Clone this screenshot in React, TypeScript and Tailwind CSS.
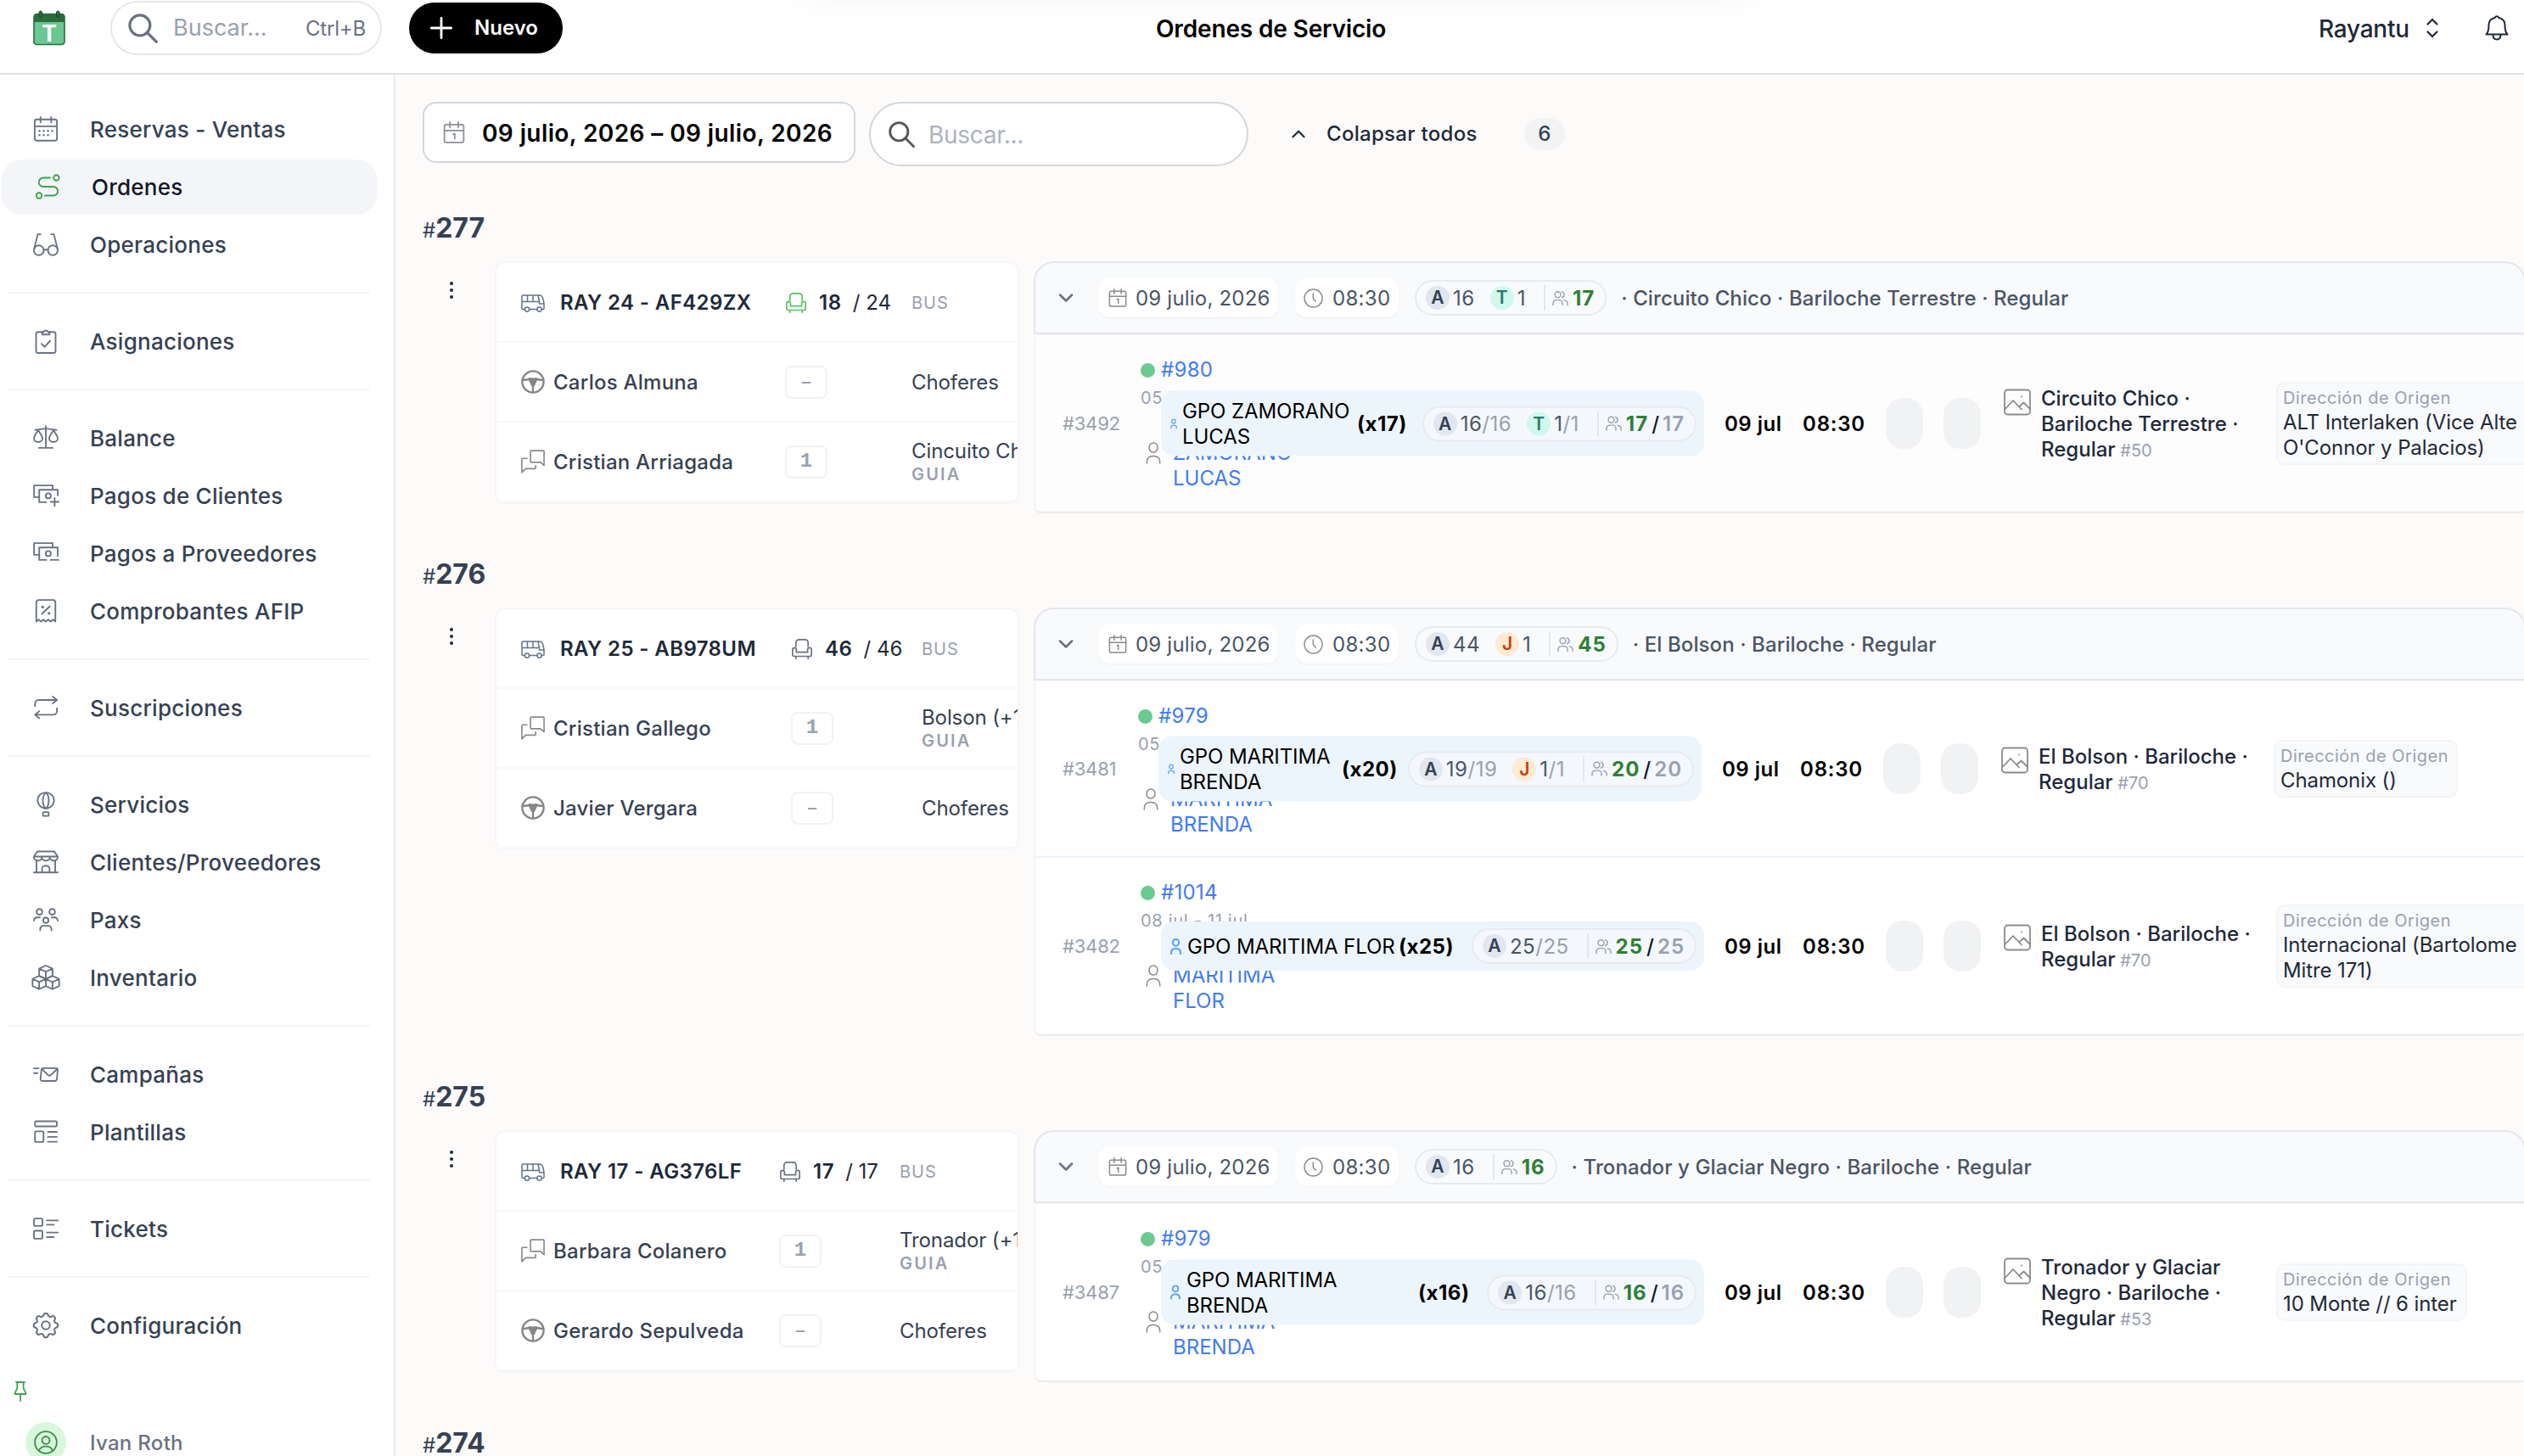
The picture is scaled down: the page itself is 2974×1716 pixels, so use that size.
import React from "react";
import clsx from "clsx";
import { ChevronDown, ChevronUp } from "lucide-react";
import { TbSettings } from "react-icons/tb";

interface IconProps {
  className?: string;
  strokeWidth?: number;
  viewBox?: string;
  children?: React.ReactNode;
}

function Svg({ className, strokeWidth = 1.6, viewBox = "0 0 24 24", children }: IconProps) {
  return (
    <svg
      viewBox={viewBox}
      fill="none"
      stroke="currentColor"
      strokeWidth={strokeWidth}
      strokeLinecap="round"
      strokeLinejoin="round"
      className={clsx("shrink-0", className)}
    >
      {children}
    </svg>
  );
}

const navIcons: Record<string, React.ReactNode> = {
  calendar: (
    <>
      <rect x="1.5" y="3" width="21" height="20" rx="2" />
      <path d="M1.5 9.5h21M7 .8v5M17 .8v5" />
      <path d="M6 13.7h.01M10 13.7h.01M14 13.7h.01M18 13.7h.01M6 17.8h.01M10 17.8h.01M14 17.8h.01" strokeWidth="2" />
    </>
  ),
  route: (
    <>
      <circle cx="20.3" cy="3.6" r="2.6" />
      <circle cx="4" cy="20.4" r="2.6" />
      <path d="M14.5 3.6H8a4.2 4.2 0 0 0 0 8.4h9.5a4.2 4.2 0 0 1 0 8.4h-8" />
    </>
  ),
  glasses: (
    <>
      <circle cx="5.4" cy="17.6" r="4.6" />
      <circle cx="18.6" cy="17.6" r="4.6" />
      <path d="M10 17h4M.9 16.5 4.4 2.5H7M23.1 16.5 19.6 2.5H17" />
    </>
  ),
  clipboard: (
    <>
      <rect x="2.8" y="3.4" width="18.4" height="19.8" rx="2" />
      <path d="M8.5 5.8V3.6h1.3a2.3 2.3 0 0 1 4.4 0h1.3v2.2z" fill="white" />
      <path d="m8 14.5 2.8 3L16 11.8" />
    </>
  ),
  balance: (
    <>
      <path d="M12 .9v20.6M5.5 21.5h13M2 4.6c4 0 6-1.3 10-1.3s6 1.3 10 1.3" />
      <path d="M4.8 5C3 7.5.8 10.5.8 12.6a4 3.4 0 0 0 8 0C8.8 10.5 6.600 7.500 4.800 5zM19.200 5c-1.800 2.500-4 5.500-4 7.600a4 3.400 0 0 0 8 0c0-2.100-2.200-5.100-4-7.600z" />
    </>
  ),
  cashPlus: (
    <>
      <path d="M5.500 13.500H.9v-11h17.600v3.300M12.500 18.300H5.800V6.600h17.400v5.200" />
      <circle cx="14.300" cy="12.300" r="2.400" />
      <path d="M16.500 18h7.500M20.300 14.300v7.500" />
    </>
  ),
  cashMinus: (
    <>
      <path d="M5.500 13.500H.9v-11h17.600v3.300M12.500 18.300H5.800V6.600h17.400v8" />
      <circle cx="14.300" cy="12.300" r="2.400" />
      <path d="M16.500 18.300h7.500" />
    </>
  ),
  receipt: (
    <>
      <path d="M3 22V4a2.300 2.300 0 0 1 2.300-2.300h13.400A2.300 2.300 0 0 1 21 4v18l-2.200-1.800-2.300 1.800-2.200-1.800-2.300 1.800-2.300-1.800L7.500 22l-2.300-1.800z" />
      <path d="m8.300 14.800 7.400-7" />
      <path d="M9 8.300h.01M15 14.200h.01" strokeWidth="2.600" />
    </>
  ),
  repeat: (
    <>
      <path d="M1.800 10.500V8.300A3.500 3.500 0 0 1 5.300 4.800h17M18.500 1.500l4 3.300-4 3.300" />
      <path d="M22.500 12.500v2.700a3.500 3.500 0 0 1-3.500 3.500H1.800M5.800 15.400l-4 3.300 4 3.300" />
    </>
  ),
  balloon: (
    <>
      <path d="M12 .9c-4.500 0-7.800 3.200-7.800 7.200 0 3.700 3 7.700 7.800 7.700s7.800-4 7.800-7.700c0-4-3.300-7.200-7.800-7.200z" />
      <path d="M12 .9c-1.900 1.500-2.800 4-2.800 7.200s.9 6.200 2.800 7.700c1.900-1.500 2.800-4.500 2.800-7.700S13.900 2.400 12 .9z" />
      <rect x="9.300" y="19.300" width="5.400" height="3.600" rx=".6" />
    </>
  ),
  store: (
    <>
      <path d="M.8 21.800h22.400M3.200 10.500v11.300M20.800 10.500v11.300M8.500 21.800v-3.700a3.500 2.700 0 0 1 7 0v3.700" />
      <path d="M4 2h16l3.200 4.800v.8a3.700 3 0 0 1-7.400 0 3.800 3 0 0 1-7.600 0 3.700 3 0 0 1-7.400 0v-.8zM.8 6.800h22.400" />
    </>
  ),
  people: (
    <>
      <circle cx="6" cy="4.500" r="2.700" />
      <circle cx="18" cy="4.500" r="2.700" />
      <circle cx="12" cy="12.500" r="2.500" />
      <path d="M.8 12.800c.2-2 1.500-3 3.200-3h2.500M23.200 12.800c-.2-2-1.500-3-3.200-3h-2.500M6.700 22v-1.300a3 3 0 0 1 3-3h4.600a3 3 0 0 1 3 3V22" />
    </>
  ),
  boxes: (
    <>
      <path d="m12 .8 6.300 2.900v6.800L12 13.400l-6.300-2.900V3.700zM5.700 3.700 12 6.600l6.300-2.900M12 6.600v6.800" />
      <path d="m5.700 10.500 6.300 2.900v6.700L5.700 23l-6.200-2.900v-6.700zM-.5 13.400l6.200 2.900 6.300-2.900M5.700 16.300V23" />
      <path d="m18.300 10.500 6.200 2.900v6.700L18.300 23 12 20.100v-6.700zM12 13.400l6.300 2.900 6.200-2.900M18.300 16.300V23" />
    </>
  ),
  mail: (
    <>
      <path d="M9.800 6.300h11.700a1.800 1.800 0 0 1 1.700 2l-.8 8.300a2 2 0 0 1-2 1.800H8.700a1.700 1.700 0 0 1-1.700-2l.8-8.300a2 2 0 0 1 2-1.800z" />
      <path d="m8.300 7 5.300 5.500a2.500 2.500 0 0 0 3.500 0L22.800 7M.8 6.500h4.400M.8 11h3.400" />
    </>
  ),
  template: (
    <>
      <rect x="1.800" y="2" width="20.600" height="4.800" rx="1" />
      <rect x="1.800" y="11.500" width="8" height="10" rx="1" />
      <path d="M14 12h8.400M14 16.700h8.400M14 21.300h8.400" />
    </>
  ),
  list: (
    <>
      <rect x=".8" y="2.500" width="8" height="7" rx="1" />
      <rect x=".8" y="14" width="8" height="7.500" rx="1" />
      <path d="M13 4.300h10.300M13 8.300h6.500M13 15.700h10.300M13 20h6.500" />
    </>
  ),
};

function NavIcon({ name, className }: { name: string; className?: string }) {
  if (name === "settings") {
    return <TbSettings strokeWidth={1.3} className={clsx("-mx-1 size-[38px] shrink-0", className)} />;
  }
  return (
    <Svg className={clsx("size-[30px] overflow-visible", className)} strokeWidth={1.5}>
      {navIcons[name]}
    </Svg>
  );
}

const SearchIcon = ({ className }: IconProps) => (
  <Svg className={className} strokeWidth={2.2}>
    <circle cx="9.500" cy="9.500" r="8.200" />
    <path d="m15.500 15.500 7.300 7.300" />
  </Svg>
);

const DayIcon = ({ className }: IconProps) => (
  <Svg className={className} strokeWidth={1.6}>
    <rect x="1.500" y="3.500" width="21" height="19.500" rx="2" />
    <path d="M1.500 10h21M7.500 .8v6M16.500 .8v6M11 14.200l1.800-.8v5.600" />
  </Svg>
);

const ClockIcon = ({ className }: IconProps) => (
  <Svg className={className} strokeWidth={1.5}>
    <circle cx="12" cy="12" r="11" />
    <path d="M11.800 6.300v6l3 3.600" />
  </Svg>
);

const BusIcon = ({ className }: IconProps) => (
  <Svg className={className} viewBox="0 0 28 24" strokeWidth={1.5}>
    <path d="M4.500 19.500H2a1 1 0 0 1-1-1V4a1 1 0 0 1 1-1h19.500c3 0 4 2 4.600 5l.9 4.500v6a1 1 0 0 1-1 1h-1.500M9.500 19.500h9.500M1 10.500h20v-1.500M7.500 3v7.500M14 3v7.500M20 3l1.500 7.500v2.500h5.500" />
    <circle cx="7" cy="19.600" r="2.700" />
    <circle cx="21.500" cy="19.600" r="2.700" />
  </Svg>
);

const SeatIcon = ({ className }: IconProps) => (
  <Svg className={className} strokeWidth={1.7}>
    <path d="M4.800 9V4.300A3.500 3.500 0 0 1 8.300.8h7.400a3.500 3.500 0 0 1 3.500 3.500V9" />
    <path d="M3.300 10.300A2.500 2.500 0 0 0 .8 12.600v6.200a1.700 1.700 0 0 0 1.700 1.700h19a1.700 1.700 0 0 0 1.700-1.700v-6.200a2.300 2.300 0 0 0-4.600 0v3H5.400v-3a2.300 2.300 0 0 0-2.100-2.300zM4.800 20.800v2.400M19.200 20.800v2.400" />
  </Svg>
);

const WheelIcon = ({ className }: IconProps) => (
  <Svg className={className} strokeWidth={2}>
    <circle cx="12" cy="12" r="10.800" />
    <path d="M1.500 10.300c3.500 0 6.500-.8 8-1.600M22.500 10.300c-3.500 0-6.500-.8-8-1.600M12 13v9.500" />
    <path d="M8.500 10.200c2-1.500 5-1.500 7 0-.8 2-2 2.500-2.300 5h-2.400c-.3-2.500-1.500-3-2.300-5z" fill="currentColor" />
  </Svg>
);

const ChatIcon = ({ className }: IconProps) => (
  <Svg className={className} strokeWidth={1.4}>
    <path d="M10.200 1h12.300a.7.7 0 0 1 .7.7V16l-3.600-3.300h-9.400a.7.7 0 0 1-.7-.7V1.700a.7.7 0 0 1 .7-.7z" />
    <path d="M6 8.800H1.500a.7.700 0 0 0-.7.700V23l3.800-3.800h9.400a.7.7 0 0 0 .7-.7V16" />
  </Svg>
);

const PersonIcon = ({ className, strokeWidth = 1.5 }: IconProps) => (
  <Svg className={className} viewBox="0 0 18 26" strokeWidth={strokeWidth}>
    <ellipse cx="9" cy="6.500" rx="5" ry="5.500" />
    <path d="M1.300 25v-1.500C1.300 19 4 16.500 9 16.500s7.700 2.500 7.700 7V25" />
  </Svg>
);

const PeopleIcon = ({ className }: IconProps) => (
  <Svg className={className} viewBox="0 0 20 20" strokeWidth={1.5}>
    <circle cx="6.800" cy="5.500" r="3.600" />
    <path d="M1 18.500v-2.300a4 4 0 0 1 4-4h3.600a4 4 0 0 1 4 4v2.300M12 2a3.600 3.600 0 0 1 0 7M15 12.500c2.500.5 4 2 4 4.200v1.800" />
  </Svg>
);

const ImageIcon = ({ className }: IconProps) => (
  <Svg className={className} viewBox="0 0 32 32" strokeWidth={1.8}>
    <rect x="1" y="1.500" width="30" height="29" rx="3.500" />
    <path d="m1.500 24 9.500-10 10 10.500M18.500 21l5-4.500L31 24" />
    <path d="M21 9.500h.01" strokeWidth="2" />
  </Svg>
);

function Logo() {
  return (
    <svg viewBox="0 0 38 42" className="h-[42px] w-[38px] shrink-0">
      <rect x="1" y="4.500" width="36" height="36" rx="3.500" fill="#68c890" stroke="#2c6b3c" strokeWidth="1.600" />
      <path d="M1 14V8a3.500 3.500 0 0 1 3.500-3.500h29A3.500 3.500 0 0 1 37 8v6z" fill="#2c6b3c" />
      <rect x="7" y="1" width="3.600" height="7.500" rx="1.800" fill="#2c6b3c" stroke="#1b4426" />
      <rect x="27.500" y="1" width="3.600" height="7.500" rx="1.800" fill="#2c6b3c" stroke="#1b4426" />
      <text x="19" y="36.500" textAnchor="middle" fontFamily="Inter" fontWeight="700" fontSize="27" fill="white">
        T
      </text>
    </svg>
  );
}

const navGroups = [
  [
    { label: "Reservas - Ventas", icon: "calendar" },
    { label: "Ordenes", icon: "route", active: true },
    { label: "Operaciones", icon: "glasses" },
  ],
  [{ label: "Asignaciones", icon: "clipboard" }],
  [
    { label: "Balance", icon: "balance" },
    { label: "Pagos de Clientes", icon: "cashPlus" },
    { label: "Pagos a Proveedores", icon: "cashMinus" },
    { label: "Comprobantes AFIP", icon: "receipt" },
  ],
  [{ label: "Suscripciones", icon: "repeat" }],
  [
    { label: "Servicios", icon: "balloon" },
    { label: "Clientes/Proveedores", icon: "store" },
    { label: "Paxs", icon: "people" },
    { label: "Inventario", icon: "boxes" },
  ],
  [
    { label: "Campañas", icon: "mail" },
    { label: "Plantillas", icon: "template" },
  ],
  [{ label: "Tickets", icon: "list" }],
  [{ label: "Configuración", icon: "settings" }],
];

interface PaxCount {
  type: "A" | "T" | "J";
  count: number;
}

interface CrewMember {
  role: "chofer" | "guia";
  name: string;
  badge: string;
  detail: string;
}

interface ServiceRow {
  id: string;
  idWidth: string;
  booking: string;
  dates: string;
  customer: string;
  group: string;
  groupWidth: string;
  iconSize: string;
  pax: PaxCount[];
  total: number;
  service: string;
  serviceId: string;
  address: string;
  addressWidth: string;
}

interface Order {
  id: string;
  vehicle: string;
  cols: string;
  used: number;
  seats: number;
  seatColor: string;
  crew: CrewMember[];
  pax: PaxCount[];
  total: number;
  title: string;
  bodyBg: string;
  rows: ServiceRow[];
}

const orders: Order[] = [
  {
    id: "277",
    vehicle: "RAY 24 - AF429ZX",
    cols: "grid-cols-[311px_149px_200px]",
    used: 18,
    seats: 24,
    seatColor: "text-[#4fc562]",
    crew: [
      { role: "chofer", name: "Carlos Almuna", badge: "–", detail: "Choferes" },
      { role: "guia", name: "Cristian Arriagada", badge: "1", detail: "Cincuito Chico" },
    ],
    pax: [
      { type: "A", count: 16 },
      { type: "T", count: 1 },
    ],
    total: 17,
    title: "Circuito Chico · Bariloche Terrestre · Regular",
    bodyBg: "bg-[#fdfdfe]",
    rows: [
      {
        id: "#3492",
        idWidth: "w-[92px]",
        booking: "#980",
        dates: "05 jul - 11 jul",
        customer: "GPO\nZAMORANO\nLUCAS",
        group: "GPO ZAMORANO\nLUCAS",
        groupWidth: "w-[206px]",
        iconSize: "h-3 w-2 mr-[6px]",
        pax: [
          { type: "A", count: 16 },
          { type: "T", count: 1 },
        ],
        total: 17,
        service: "Circuito Chico ·\nBariloche Terrestre ·\nRegular",
        serviceId: "#50",
        address: "ALT Interlaken (Vice Alte\nO'Connor y Palacios)",
        addressWidth: "w-[310px]",
      },
    ],
  },
  {
    id: "276",
    vehicle: "RAY 25 - AB978UM",
    cols: "grid-cols-[318px_154px_200px]",
    used: 46,
    seats: 46,
    seatColor: "text-gray-500",
    crew: [
      { role: "guia", name: "Cristian Gallego", badge: "1", detail: "Bolson (+1)" },
      { role: "chofer", name: "Javier Vergara", badge: "–", detail: "Choferes" },
    ],
    pax: [
      { type: "A", count: 44 },
      { type: "J", count: 1 },
    ],
    total: 45,
    title: "El Bolson · Bariloche · Regular",
    bodyBg: "bg-white",
    rows: [
      {
        id: "#3481",
        idWidth: "w-[89px]",
        booking: "#979",
        dates: "05 jul - 11 jul",
        customer: "GPO\nMARITIMA\nBRENDA",
        group: "GPO MARITIMA\nBRENDA",
        groupWidth: "w-[191px]",
        iconSize: "h-3 w-2 mr-[6px]",
        pax: [
          { type: "A", count: 19 },
          { type: "J", count: 1 },
        ],
        total: 20,
        service: "El Bolson · Bariloche ·\nRegular",
        serviceId: "#70",
        address: "Chamonix ()",
        addressWidth: "w-[217px]",
      },
      {
        id: "#3482",
        idWidth: "w-[92px]",
        booking: "#1014",
        dates: "08 jul - 11 jul",
        customer: "GPO\nMARITIMA\nFLOR",
        group: "GPO MARITIMA FLOR",
        groupWidth: "w-[249px]",
        iconSize: "h-[19px] w-[13px] mr-[7px]",
        pax: [{ type: "A", count: 25 }],
        total: 25,
        service: "El Bolson · Bariloche ·\nRegular",
        serviceId: "#70",
        address: "Internacional (Bartolome\nMitre 171)",
        addressWidth: "w-[310px]",
      },
    ],
  },
  {
    id: "275",
    vehicle: "RAY 17 - AG376LF",
    cols: "grid-cols-[304px_142px_200px]",
    used: 17,
    seats: 17,
    seatColor: "text-gray-500",
    crew: [
      { role: "guia", name: "Barbara Colanero", badge: "1", detail: "Tronador (+1)" },
      { role: "chofer", name: "Gerardo Sepulveda", badge: "–", detail: "Choferes" },
    ],
    pax: [{ type: "A", count: 16 }],
    total: 16,
    title: "Tronador y Glaciar Negro · Bariloche · Regular",
    bodyBg: "bg-white",
    rows: [
      {
        id: "#3487",
        idWidth: "w-[92px]",
        booking: "#979",
        dates: "05 jul - 11 jul",
        customer: "GPO\nMARITIMA\nBRENDA",
        group: "GPO MARITIMA\nBRENDA",
        groupWidth: "w-[273px]",
        iconSize: "h-[17px] w-3 mr-[7px]",
        pax: [{ type: "A", count: 16 }],
        total: 16,
        service: "Tronador y Glaciar\nNegro · Bariloche ·\nRegular",
        serviceId: "#53",
        address: "10 Monte // 6 inter",
        addressWidth: "w-[225px]",
      },
    ],
  },
];

const paxColors = {
  A: "bg-[#e2e6ef] text-[#334155]",
  T: "bg-[#d1f8ee] text-[#2b7a6e]",
  J: "bg-[#fdebd2] text-[#c2410c]",
};

function PaxPill({ pax, total, ratio }: { pax: PaxCount[]; total: number; ratio?: boolean }) {
  return (
    <div
      className={clsx(
        "flex h-[42px] shrink-0 items-center rounded-full border-2 border-[#e8eaed] pr-3 pl-[11px] text-2xl text-gray-600",
        ratio ? "bg-[#f4f8fc]" : "bg-[#f9fafb]"
      )}
    >
      <div className="flex gap-[18px]">
        {pax.map((p) => (
          <div key={p.type} className="flex items-center">
            <span
              className={clsx(
                "mr-1 flex size-7 items-center justify-center rounded-full text-[21px] font-semibold",
                paxColors[p.type]
              )}
            >
              {p.type}
            </span>
            <span className="pt-px tracking-[0.5px]">
              {p.count}
              {ratio && <span className="text-gray-400">/{p.count}</span>}
            </span>
          </div>
        ))}
      </div>
      <span className="ml-[21px] h-[30px] w-[2px] bg-gray-200" />
      <PeopleIcon className="ml-2 size-[19px] text-gray-400" />
      <span className="ml-[5px] pt-px font-bold tracking-[1px] text-[#2f7f35]">{total}</span>
      {ratio && (
        <>
          <span className="mx-1 pt-px font-medium text-gray-900">/</span>
          <span className="pt-px font-semibold tracking-[1px] text-gray-400">{total}</span>
        </>
      )}
    </div>
  );
}

function VehicleCard({ order }: { order: Order }) {
  return (
    <div className="h-[286px] w-[618px] shrink-0 overflow-hidden rounded-xl border-2 border-[#f6f6f8] bg-white text-2xl text-gray-700">
      <div className={clsx("grid h-[94px] items-center border-b-2 border-[#f7f8f9] pt-px pl-[29px] text-gray-800", order.cols)}>
        <div className="flex items-center gap-[18px]">
          <BusIcon className="h-6 w-7 text-[#64748b]" />
          <span className="font-semibold tracking-[0.4px]">{order.vehicle}</span>
        </div>
        <div className="flex items-center whitespace-nowrap">
          <SeatIcon className={clsx("mr-[15px] ml-px size-6", order.seatColor)} />
          <span className="mr-[13px] font-semibold tracking-[0.6px]">{order.used}</span>
          <span>/ {order.seats}</span>
        </div>
        <span className="pt-px text-xl tracking-[1px] text-gray-400">BUS</span>
      </div>
      {order.crew.map((member) => (
        <div
          key={member.name}
          className={clsx("grid h-[94px] items-center border-b-2 border-[#f7f8f9] pl-[29px]", order.cols)}
        >
          <div className="flex items-center gap-[10px]">
            {member.role === "chofer" ? (
              <WheelIcon className="size-7 text-[#868686]" />
            ) : (
              <ChatIcon className="size-7 text-[#8a8a8a]" />
            )}
            <span className="pt-px font-medium tracking-[0.25px]">{member.name}</span>
          </div>
          <div className="flex h-[39px] w-[50px] items-center justify-center rounded-lg border-2 border-[#f1f2f4] text-gray-400">
            {member.badge === "–" ? (
              <span className="text-xl font-semibold">{member.badge}</span>
            ) : (
              <span className="font-['Liberation_Mono'] text-2xl font-bold">{member.badge}</span>
            )}
          </div>
          <div className="pt-px leading-7 tracking-[-0.1px] whitespace-nowrap">
            {member.detail}
            {member.role === "guia" && (
              <div className="text-xl leading-[26px] font-semibold tracking-[2.2px] text-gray-400">GUIA</div>
            )}
          </div>
        </div>
      ))}
    </div>
  );
}

function ServiceLine({ row, last }: { row: ServiceRow; last: boolean }) {
  return (
    <div className={clsx("flex h-[208px] items-center pl-8 text-2xl", !last && "border-b-2 border-[#eff4fa]")}>
      <span className={clsx("shrink-0 pt-px text-[22px] tracking-[-0.2px] text-gray-400", row.idWidth)}>{row.id}</span>

      {/* Booking with the group chip on top of it */}
      <div className="relative flex h-full w-[688px] shrink-0 flex-col pt-[26px]">
        <div className="flex h-[30px] items-center gap-[7px] text-[#3f7bf6]">
          <span className="size-[17px] rounded-full bg-[#6bca92]" />
          <span className="tracking-[0.3px]">{row.booking}</span>
        </div>
        <div className="mt-[4px] text-xl leading-7 tracking-[0.7px] text-gray-400">{row.dates}</div>
        <div className="mt-[5px] flex items-center gap-[14px] pl-[6px] leading-[30px] whitespace-pre text-[#3f7bf6]">
          <PersonIcon className="h-[26px] w-[18px] text-[#8b8b8b]" />
          <span className="pt-px">{row.customer}</span>
        </div>
        <div className="absolute top-1/2 left-[24px] flex w-[640px] -translate-y-1/2 items-center rounded-2xl bg-[#edf5fc] py-2 pr-[9px] pl-[11px] text-black">
          <PersonIcon className={clsx("text-[#60a5fa]", row.iconSize)} strokeWidth={3} />
          <span className={clsx("shrink-0 pt-px leading-[30px] tracking-[-0.1px] whitespace-pre", row.groupWidth)}>
            {row.group}
          </span>
          <span className="pt-px font-bold tracking-[0.5px]">(x{row.total})</span>
          <div className="ml-auto">
            <PaxPill pax={row.pax} total={row.total} ratio />
          </div>
        </div>
      </div>

      <span className="w-[92px] shrink-0 pt-px font-semibold tracking-[0.5px] text-black">09 jul</span>
      <span className="w-[98px] shrink-0 pt-px font-semibold tracking-[0.8px] text-black">08:30</span>
      <div className="flex shrink-0 gap-6">
        <span className="h-[60px] w-[44px] rounded-[20px] bg-[#f1f2f4]" />
        <span className="h-[60px] w-[44px] rounded-[20px] bg-[#f1f2f4]" />
      </div>
      <div className="ml-[27px] flex w-[321px] shrink-0 items-start gap-3">
        <ImageIcon className="mt-1 size-8 text-[#8b8b8b]" />
        <p className="pt-px leading-[30px] font-medium whitespace-pre text-gray-800">
          {row.service}
          <span className="text-xl font-normal text-gray-400"> {row.serviceId}</span>
        </p>
      </div>
      <div
        className={clsx(
          "shrink-0 rounded-[10px] border-2 border-[#f3f4f6] bg-[#f9fafb] px-[6px] py-[3px] whitespace-pre",
          row.addressWidth
        )}
      >
        <div className="text-xl leading-7 tracking-[0.5px] text-gray-400">Dirección de Origen</div>
        <div className="leading-[30px] tracking-[-0.1px] text-gray-800">{row.address}</div>
      </div>
    </div>
  );
}

function OrderGroup({ order }: { order: Order }) {
  return (
    <section className="pb-[54px]">
      <OrderHeading id={order.id} />
      <div className="mt-[19px] flex items-start">
        <div className="flex w-[85px] shrink-0 flex-col gap-1 pt-6 pl-8">
          <span className="size-1 rounded-full bg-gray-800" />
          <span className="size-1 rounded-full bg-gray-800" />
          <span className="size-1 rounded-full bg-gray-800" />
        </div>
        <VehicleCard order={order} />
        <div className="ml-[17px] w-[1758px] shrink-0">
          <div className="flex h-[86px] items-center rounded-t-[24px] border-2 border-[#e4e6eb] bg-[#f9fafc] pl-[22px] text-2xl text-gray-600">
            <ChevronDown className="mr-6 size-7 shrink-0 text-gray-500" strokeWidth={2.2} />
            <div className="mr-5 flex h-[46px] w-[212px] items-center gap-[10px] rounded-[14px] bg-white pl-3 shadow-xs">
              <DayIcon className="size-[22px] text-[#8b8b8b]" />
              <span className="pt-px tracking-[0.2px] whitespace-nowrap">09 julio, 2026</span>
            </div>
            <div className="mr-[19px] flex h-[46px] w-[122px] items-center gap-[11px] rounded-[14px] bg-white pl-[10px] shadow-xs">
              <ClockIcon className="size-[23px] text-[#8b8b8b]" />
              <span className="pt-px tracking-[0.3px]">08:30</span>
            </div>
            <PaxPill pax={order.pax} total={order.total} />
            <span className="ml-[17px] pt-px font-medium tracking-[0.1px]">· {order.title}</span>
          </div>
          <div className={clsx("mt-px ml-[2px] rounded-md shadow-sm", order.bodyBg)}>
            {order.rows.map((row, i) => (
              <ServiceLine key={row.id} row={row} last={i === order.rows.length - 1} />
            ))}
          </div>
        </div>
      </div>
    </section>
  );
}

function OrderHeading({ id }: { id: string }) {
  return (
    <h2 className="flex h-10 items-baseline text-[32px] leading-10 font-bold text-gray-700">
      <span className="text-2xl font-normal">#</span>
      {id}
    </h2>
  );
}

function Header() {
  return (
    <header className="relative h-[88px] shrink-0 overflow-hidden border-b-2 border-[#dfe2e7] bg-white">
      <div className="absolute -top-12 left-[940px] h-10 w-[1130px] rounded-full shadow-[0_4px_40px_rgba(0,0,0,0.05)]" />
      <div className="relative flex h-[66px] items-center pr-[18px] pl-[39px]">
        <div className="flex w-[1323px] shrink-0 items-center">
          <Logo />
          <div className="ml-[53px] flex h-[64px] w-[320px] items-center rounded-full border-2 border-gray-200 bg-white pr-[17px] pl-[19px]">
            <SearchIcon className="size-[35px] text-gray-500" />
            <span className="ml-[18px] text-[27px] text-gray-400">Buscar...</span>
            <span className="ml-auto pt-px text-2xl tracking-[-0.2px] text-gray-500">Ctrl+B</span>
          </div>
          <button className="ml-8 flex h-[60px] w-[181px] items-center rounded-full bg-black pl-6 text-2xl font-semibold text-white">
            <Svg className="size-[28px]" strokeWidth={2.4}>
              <path d="M12 2v20M2 12h20" />
            </Svg>
            <span className="ml-[25px]">Nuevo</span>
          </button>
        </div>
        <h1 className="pt-px text-[28px] font-semibold tracking-[-0.15px] text-black">Ordenes de Servicio</h1>
        <div className="ml-auto flex items-center text-gray-800">
          <span className="pt-px text-[28px] font-medium tracking-[-0.2px]">Rayantu</span>
          <Svg className="ml-[19px] h-6 w-4" viewBox="0 0 16 24" strokeWidth={2.2}>
            <path d="m2.500 7.500 5.500-5.500 5.500 5.500M2.500 16.500 8 22l5.500-5.500" />
          </Svg>
          <Svg className="ml-[54px] h-[30px] w-7" viewBox="0 0 28 30" strokeWidth={2}>
            <path d="M1.500 22.500c2.500-2.500 3-5 3-11C4.500 6.500 8 3.800 11.700 3a2.400 2.400 0 0 1 4.600 0c3.700.8 7.200 3.500 7.200 8.500 0 6 .5 8.500 3 11zM9.500 23c0 3.500 2 5.500 4.500 5.500s4.500-2 4.500-5.500" />
          </Svg>
        </div>
      </div>
    </header>
  );
}

function Sidebar() {
  return (
    <aside className="w-[466px] shrink-0 overflow-hidden border-r-2 border-[#e8eaed] bg-white pt-8">
      {navGroups.map((group, i) => (
        <React.Fragment key={i}>
          {i > 0 && <div className="my-6 ml-[10px] h-[2px] w-[426px] bg-[#f3f4f6]" />}
          <nav className="flex flex-col gap-1">
            {group.map((item) => (
              <a
                key={item.label}
                className={clsx(
                  "ml-[2px] flex h-16 w-[442px] items-center gap-[37px] rounded-[24px] text-[26px] font-medium tracking-[0.25px]",
                  "active" in item ? "bg-[#f4f5f8] pl-[39px] text-gray-900 shadow-xs" : "pl-[37px] text-gray-700"
                )}
              >
                <NavIcon name={item.icon} className={"active" in item ? "text-[#3fa34d]" : "text-gray-500"} />
                <span>{item.label}</span>
              </a>
            ))}
          </nav>
        </React.Fragment>
      ))}
      <Svg className="mt-[34px] ml-4 h-6 w-4 text-[#3fa34d]" viewBox="0 0 16 24" strokeWidth={1.8}>
        <path d="M3 1h10M4.300 1v6.500C4.300 10 1.500 12 1.500 15h13c0-3-2.800-5-2.800-7.500V1M8 15v8" />
      </Svg>
      <div className="mt-6 flex items-center gap-[28px] pl-[30px]">
        <span className="flex size-12 items-center justify-center rounded-full bg-[#d9f7dc] text-[#3f8f46]">
          <Svg className="size-7" strokeWidth={1.6}>
            <circle cx="12" cy="12" r="11" />
            <circle cx="12" cy="9.800" r="3.800" />
            <path d="M5 20.200c1.500-3 4-4.200 7-4.200s5.500 1.200 7 4.200" />
          </Svg>
        </span>
        <span className="pt-px text-2xl font-medium tracking-[0.3px] text-gray-500">Ivan Roth</span>
      </div>
    </aside>
  );
}

export default function App() {
  return (
    <div className="flex h-screen w-screen flex-col overflow-hidden bg-[#fcfbfa] font-[Inter,sans-serif]">
      <Header />
      <div className="flex min-h-0 flex-1">
        <Sidebar />
        <main className="min-w-0 flex-1 overflow-hidden pt-8 pl-8">
          {/* Filters */}
          <div className="mb-[53px] flex h-[76px] items-start">
            <div className="flex h-[72px] w-[510px] items-center rounded-2xl border-2 border-[#d3d7dd] bg-white pl-[22px] text-[28px] font-semibold whitespace-nowrap text-black">
              <DayIcon className="size-[26px] text-[#8b8f96]" />
              <span className="ml-[20px] pt-[2px] tracking-[0.4px]">09 julio, 2026 – 09 julio, 2026</span>
            </div>
            <div className="ml-4 flex h-[76px] w-[447px] items-center rounded-full border-2 border-[#d3d7dd] bg-white pl-[21px]">
              <SearchIcon className="size-[31px] text-[#555]" />
              <span className="ml-4 pt-[2px] text-[28px] tracking-[-0.3px] text-[#adb3bd]">Buscar...</span>
            </div>
            <div className="ml-[46px] flex h-[76px] items-center text-2xl text-gray-800">
              <ChevronUp className="size-[26px]" strokeWidth={2} />
              <span className="ml-5 font-medium tracking-[0.3px]">Colapsar todos</span>
              <span className="ml-[55px] flex h-[38px] w-12 items-center justify-center rounded-full bg-[#f1f3f5] font-medium text-gray-700">
                6
              </span>
            </div>
          </div>

          {orders.map((order) => (
            <OrderGroup key={order.id} order={order} />
          ))}
          <OrderHeading id="274" />
        </main>
      </div>
    </div>
  );
}
